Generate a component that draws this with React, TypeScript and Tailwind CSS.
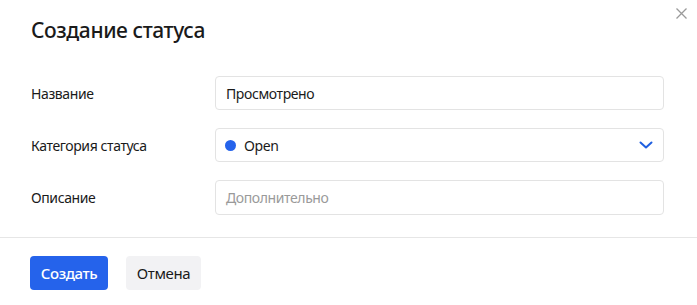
import React from "react";

export default function App() {
  return (
    <div
      className="w-[697px] h-[305px] bg-white relative text-[#1a1a1a] tracking-[-0.4px]"
      style={{ fontFamily: '"Noto Sans", "Open Sans", sans-serif' }}
    >
      <button className="absolute left-[676px] top-[8px] w-[11px] h-[11px] text-[#9a9a9a]">
        <svg width="11" height="11" viewBox="0 0 11 11" fill="none" stroke="currentColor" strokeWidth="1.3">
          <path d="M0.5 0.5 L10.5 10.5 M10.5 0.5 L0.5 10.5" />
        </svg>
      </button>
      <div className="pl-[31px] pr-[33px] pt-[14px]">
        <h1 className="text-[21px] font-medium leading-[32px] tracking-[-0.4px]">Создание статуса</h1>
        <div className="mt-[30px] flex flex-col gap-[18px]">
          <div className="flex items-center h-[34px]">
            <div className="w-[184px] text-[14px]">Название</div>
            <div className="flex-1 h-[34px] border border-[#e3e3e3] rounded-[4px] flex items-center pl-[10px] text-[14px]">
              Просмотрено
            </div>
          </div>
          <div className="flex items-center h-[34px]">
            <div className="w-[184px] text-[14px]">Категория статуса</div>
            <div className="flex-1 h-[34px] border border-[#e3e3e3] rounded-[4px] flex items-center pl-[9px] pr-[10px] text-[14px]">
              <span className="w-[11px] h-[11px] rounded-full bg-[#2563eb] mr-[8px]" />
              <span className="flex-1">Open</span>
              <svg width="14" height="8" viewBox="0 0 14 8" fill="none" stroke="#1f5fe0" strokeWidth="2" strokeLinecap="round" strokeLinejoin="round">
                <path d="M1.5 1.5 L7 6.5 L12.5 1.5" />
              </svg>
            </div>
          </div>
          <div className="flex items-center h-[34px]">
            <div className="w-[184px] text-[14px]">Описание</div>
            <div className="flex-1 h-[35px] border border-[#e3e3e3] rounded-[4px] flex items-center pl-[10px] text-[14px] text-[#9a9a9a]">
              Дополнительно
            </div>
          </div>
        </div>
      </div>
      <div className="mt-[23px] border-t border-[#e6e6e6] pt-[18px] pl-[30px] flex gap-[18px]">
        <button className="h-[34px] w-[78px] rounded-[4px] bg-[#2563eb] text-white text-[15px] font-medium">
          Создать
        </button>
        <button className="h-[34px] w-[75px] rounded-[4px] bg-[#f2f2f4] text-[#1a1a1a] text-[15px]">
          Отмена
        </button>
      </div>
    </div>
  );
}
